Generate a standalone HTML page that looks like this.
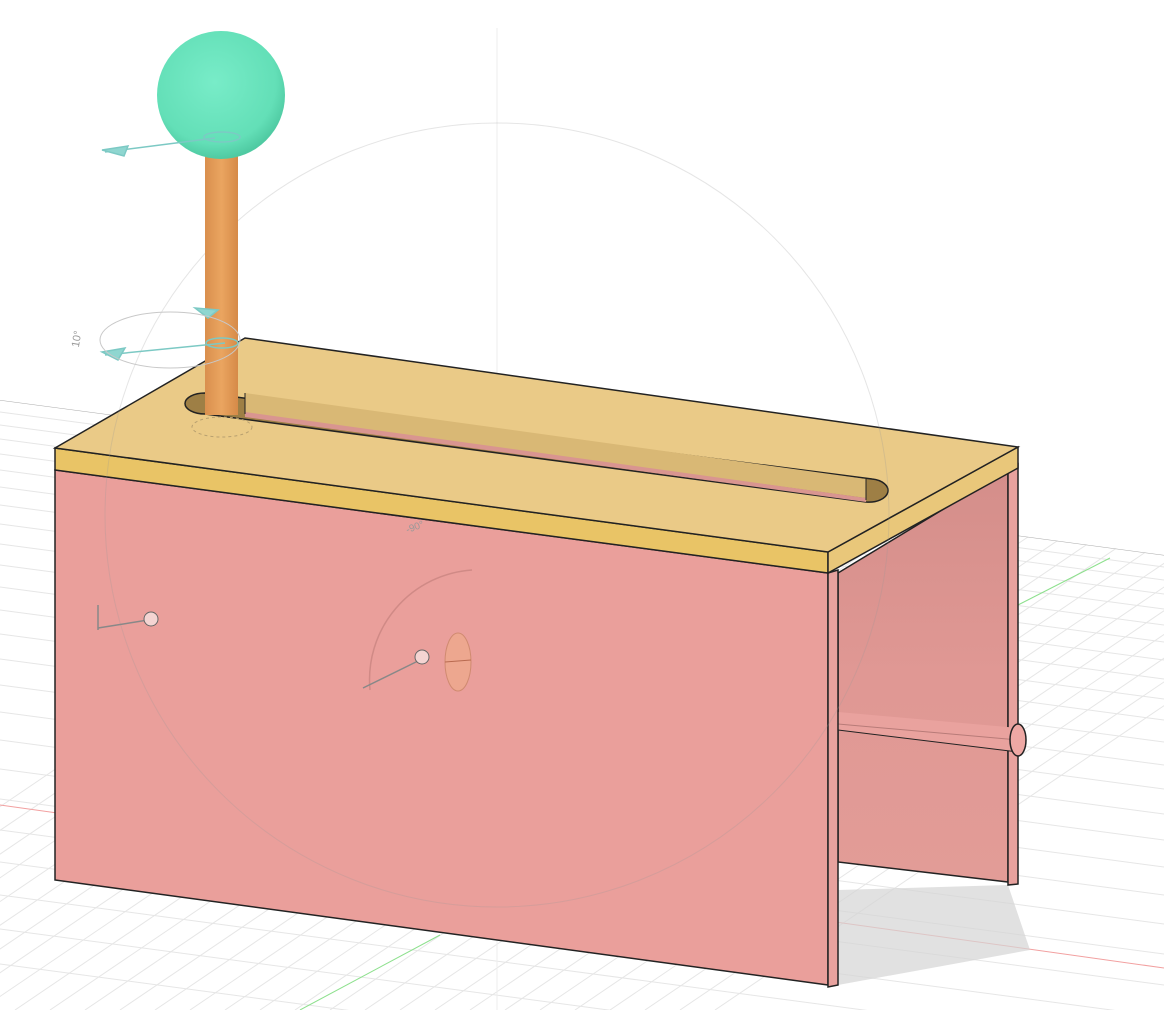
<!DOCTYPE html>
<html><head><meta charset="utf-8"><style>html,body{margin:0;padding:0;background:#fff;overflow:hidden;width:1164px;height:1010px}svg{display:block}</style></head>
<body>
<svg width="1164" height="1010" viewBox="0 0 1164 1010" xmlns="http://www.w3.org/2000/svg">
<defs>
<clipPath id="floor"><polygon points="0,400 1164,555 1164,1010 0,1010"/></clipPath>
<linearGradient id="rod" x1="0" x2="1"><stop offset="0" stop-color="#d98f4e"/><stop offset="0.5" stop-color="#eaa560"/><stop offset="1" stop-color="#d68a48"/></linearGradient>
<radialGradient id="ball" cx="0.45" cy="0.4" r="0.6"><stop offset="0" stop-color="#78ecc8"/><stop offset="0.8" stop-color="#63dfb7"/><stop offset="1" stop-color="#4fcaa2"/></radialGradient>
<linearGradient id="side" x1="0" y1="0" x2="0" y2="1"><stop offset="0" stop-color="#d48e8a"/><stop offset="0.5" stop-color="#e09894"/><stop offset="1" stop-color="#e29c97"/></linearGradient>
</defs>
<g clip-path="url(#floor)" stroke="#e6e6e6" stroke-width="1" fill="none">
<g>
<line x1="0" y1="412" x2="1164" y2="567"/><line x1="0" y1="425" x2="1164" y2="580"/><line x1="0" y1="439" x2="1164" y2="594"/><line x1="0" y1="454" x2="1164" y2="609"/><line x1="0" y1="470" x2="1164" y2="625"/><line x1="0" y1="487" x2="1164" y2="642"/><line x1="0" y1="505" x2="1164" y2="660"/><line x1="0" y1="524" x2="1164" y2="679"/><line x1="0" y1="544" x2="1164" y2="699"/><line x1="0" y1="565" x2="1164" y2="720"/><line x1="0" y1="587" x2="1164" y2="742"/><line x1="0" y1="610" x2="1164" y2="765"/><line x1="0" y1="634" x2="1164" y2="789"/><line x1="0" y1="659" x2="1164" y2="814"/><line x1="0" y1="685" x2="1164" y2="840"/><line x1="0" y1="712" x2="1164" y2="867"/><line x1="0" y1="740" x2="1164" y2="895"/><line x1="0" y1="769" x2="1164" y2="924"/><line x1="0" y1="799" x2="1164" y2="954"/><line x1="0" y1="830" x2="1164" y2="985"/><line x1="0" y1="862" x2="1164" y2="1017"/><line x1="0" y1="895" x2="1164" y2="1050"/><line x1="0" y1="929" x2="1164" y2="1084"/><line x1="0" y1="964" x2="1164" y2="1119"/>
</g>
<g>
<line x1="-300" y1="1010" x2="600" y2="400"/><line x1="-265" y1="1010" x2="635" y2="400"/><line x1="-230" y1="1010" x2="670" y2="400"/><line x1="-195" y1="1010" x2="705" y2="400"/><line x1="-160" y1="1010" x2="740" y2="400"/><line x1="-125" y1="1010" x2="775" y2="400"/><line x1="-90" y1="1010" x2="810" y2="400"/><line x1="-55" y1="1010" x2="845" y2="400"/><line x1="-20" y1="1010" x2="880" y2="400"/><line x1="15" y1="1010" x2="915" y2="400"/><line x1="50" y1="1010" x2="950" y2="400"/><line x1="85" y1="1010" x2="985" y2="400"/><line x1="120" y1="1010" x2="1020" y2="400"/><line x1="155" y1="1010" x2="1055" y2="400"/><line x1="190" y1="1010" x2="1090" y2="400"/><line x1="225" y1="1010" x2="1125" y2="400"/><line x1="260" y1="1010" x2="1160" y2="400"/><line x1="295" y1="1010" x2="1195" y2="400"/><line x1="330" y1="1010" x2="1230" y2="400"/><line x1="365" y1="1010" x2="1265" y2="400"/><line x1="400" y1="1010" x2="1300" y2="400"/><line x1="435" y1="1010" x2="1335" y2="400"/><line x1="470" y1="1010" x2="1370" y2="400"/><line x1="505" y1="1010" x2="1405" y2="400"/><line x1="540" y1="1010" x2="1440" y2="400"/><line x1="575" y1="1010" x2="1475" y2="400"/><line x1="610" y1="1010" x2="1510" y2="400"/><line x1="645" y1="1010" x2="1545" y2="400"/><line x1="680" y1="1010" x2="1580" y2="400"/><line x1="715" y1="1010" x2="1615" y2="400"/>
</g>
<line x1="0" y1="400" x2="1164" y2="555" stroke="#aaa"/>
<line x1="0" y1="805" x2="1164" y2="968" stroke="#f2a0a0"/>
<line x1="1110" y1="558" x2="1018" y2="605" stroke="#8de08d"/>
<line x1="440" y1="935" x2="300" y2="1010" stroke="#8de08d"/>
</g>
<line x1="497" y1="28" x2="497" y2="1010" stroke="#eee"/>
<!-- shadow -->
<polygon points="838,890 1008,885 1030,950 838,985" fill="#d4d4d4" opacity="0.7"/>
<!-- back right panel -->
<polygon points="838,573 1008,470 1008,882 838,862" fill="url(#side)" stroke="#222" stroke-width="1.5"/>
<polygon points="1008,470 1018,464 1018,884 1008,885" fill="#e8a29e" stroke="#222" stroke-width="1.5"/>
<!-- right rod -->
<polygon points="838,712 1018,728 1018,752 838,730" fill="#e9a29e"/>
<line x1="838" y1="730" x2="1018" y2="752" stroke="#222"/>
<line x1="838" y1="724" x2="1018" y2="740" stroke="#b87b78"/>
<ellipse cx="1018" cy="740" rx="8" ry="16" fill="#eea8a4" stroke="#222" stroke-width="1.5"/>
<!-- front panel -->
<polygon points="55,470 828,573 828,985 55,880" fill="#ea9f9b" stroke="#222" stroke-width="1.5"/>
<polygon points="828,573 838,570 838,985 828,987" fill="#e8a29e" stroke="#222" stroke-width="1.5"/>
<!-- top slab -->
<polygon points="55,448 828,552 828,573 55,470" fill="#e9c466" stroke="#222" stroke-width="1.5"/>
<polygon points="828,552 1018,447 1018,468 828,573" fill="#e9c77a" stroke="#222" stroke-width="1.5"/>
<polygon points="55,448 245,338 1018,447 828,552" fill="#eaca87" stroke="#222" stroke-width="1.5"/>
<!-- slot -->
<path d="M205,393 L872,479 A18,11 0 0 1 866,502 L205,414 A20,10.5 0 0 1 205,393 Z" fill="#9e7f45" stroke="#222" stroke-width="1.5"/>
<path d="M245,393 L866,479 L866,498 L245,414 Z" fill="#d9b875"/>
<path d="M245,412 L866,498 L866,502 L245,417 Z" fill="#d99590"/>
<line x1="245" y1="393" x2="245" y2="414" stroke="#222"/>
<line x1="866" y1="479" x2="866" y2="500" stroke="#222"/>
<ellipse cx="222" cy="427" rx="30" ry="10" fill="none" stroke="#b8a070" stroke-dasharray="3,3"/>
<!-- faint circle overlay -->
<circle cx="497" cy="515" r="392" fill="none" stroke="#999" stroke-opacity="0.25"/>
<!-- lever -->
<rect x="205" y="150" width="33" height="265" fill="url(#rod)"/>
<circle cx="221" cy="95" r="64" fill="url(#ball)"/>
<!-- manipulator hints -->
<g stroke="#7cc9c4" stroke-width="1.5" fill="#8fd6d0">
<line x1="105" y1="152" x2="215" y2="138"/><polygon points="102,150 128,146 124,156"/>
<ellipse cx="222" cy="137" rx="18" ry="5" fill="none"/>
<line x1="105" y1="355" x2="225" y2="343"/><polygon points="102,352 125,348 118,360"/>
<ellipse cx="222" cy="343" rx="16" ry="5" fill="none"/>
<polygon points="195,308 218,310 208,318"/>
</g>
<ellipse cx="170" cy="340" rx="70" ry="28" fill="none" stroke="#c8c8c8"/>
<text x="68" y="345" font-family="Liberation Sans, sans-serif" font-size="11" fill="#999" transform="rotate(-80 75 340)">10°</text>
<text x="405" y="530" font-family="Liberation Sans, sans-serif" font-size="10" fill="#999" transform="rotate(-20 415 525)">-90°</text>
<!-- front markers -->
<g stroke="#888" stroke-width="1.5" fill="none">
<path d="M370,690 A110,110 0 0 1 472,570" stroke="#d08a86"/>
<line x1="363" y1="688" x2="420" y2="660"/>
<line x1="98" y1="628" x2="148" y2="620"/>
<line x1="98" y1="605" x2="98" y2="630"/>
</g>
<circle cx="151" cy="619" r="7" fill="#f4d4d2" stroke="#666"/>
<circle cx="422" cy="657" r="7" fill="#f4d4d2" stroke="#666"/>
<ellipse cx="458" cy="662" rx="13" ry="29" fill="#eda78f" stroke="#d08a70"/>
<line x1="445" y1="662" x2="471" y2="660" stroke="#b86a50"/>
</svg>
</body></html>
